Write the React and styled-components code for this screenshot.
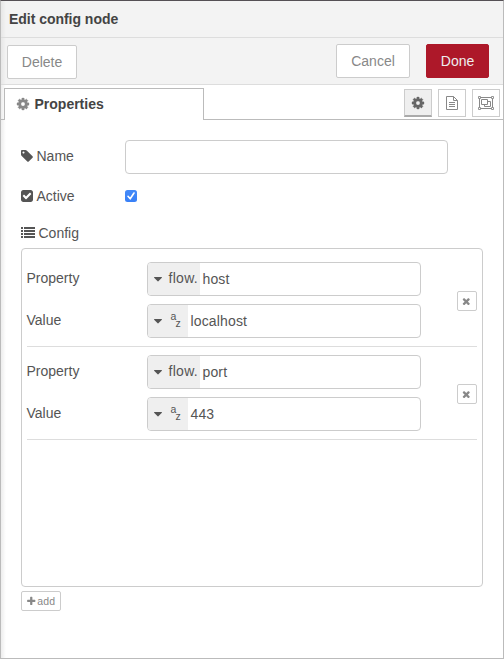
import React from "react";
import styled, { createGlobalStyle } from "styled-components";

const GlobalStyle = createGlobalStyle`
  *, *::before, *::after { box-sizing: border-box; }
  body {
    margin: 0;
    background: #fff;
    color: #555;
    font: 14px/20px "Helvetica Neue", Helvetica, "Liberation Sans", Arial, sans-serif;
  }
  button, input { font: inherit; }
`;

const Tray = styled.div`
  display: flex;
  flex-direction: column;
  height: 659px;
  width: 504px;
  border: 1px solid #bbb;
  border-top-color: #555055;
  background: linear-gradient(to right, rgba(0, 0, 0, 0.07), rgba(0, 0, 0, 0) 5px) #fff;
`;

const Header = styled.header`
  height: 37px;
  padding: 8px 8px 0;
  border-bottom: 1px solid #ddd;
  background: linear-gradient(to right, rgba(0, 0, 0, 0.05), rgba(0, 0, 0, 0) 5px) #f3f3f3;
  color: #444;
  font-weight: bold;
  letter-spacing: -0.03px;
`;

const Toolbar = styled.div`
  display: flex;
  align-items: flex-start;
  height: 47px;
  padding: 6px 14px 0 6px;
  border-bottom: 1px solid #ddd;
  background: linear-gradient(to right, rgba(0, 0, 0, 0.05), rgba(0, 0, 0, 0) 5px) #f3f3f3;
`;

const ToolbarGroup = styled.div`
  display: flex;
  gap: 16px;
  margin-left: auto;
`;

const Button = styled.button`
  width: ${(p) => p.$width}px;
  height: 34px;
  margin: ${(p) => (p.$lowered ? "1px 0 0" : "0")};
  padding: 0;
  border: 1px solid ${(p) => (p.$primary ? "#ad1829" : "#ccc")};
  border-radius: 2px;
  background: ${(p) => (p.$primary ? "#ad1829" : "#fff")};
  color: ${(p) => (p.$primary ? "#eee" : "#888")};
`;

const TabBar = styled.div`
  display: flex;
  height: 35px;
  padding-top: 3px;
`;

const TabEdge = styled.div`
  width: 3px;
  border-bottom: 1px solid #bbb;
`;

const Tab = styled.div`
  display: flex;
  gap: 5px;
  width: 200px;
  padding: 5px 0 0 10.5px;
  border: 1px solid #bbb;
  border-bottom: 0;
  background: #fff;
  color: #444;
  font-weight: bold;
  svg { color: #888; margin-top: 3px; }
`;

const TabTools = styled.div`
  flex: 1;
  display: flex;
  justify-content: flex-end;
  gap: 6px;
  padding: 1px 3px 0 0;
  border-bottom: 1px solid #bbb;
`;

const TabTool = styled.button`
  display: flex;
  align-items: center;
  justify-content: center;
  width: 28px;
  height: 28px;
  padding: 0;
  border: 1px solid #ccc;
  ${(p) => p.$active && "border-bottom: 2px solid #aaa;"}
  background: ${(p) => (p.$active ? "#efefef" : "#fff")};
  color: ${(p) => (p.$active ? "#666" : "#888")};
`;

const Form = styled.form`
  display: flex;
  flex-direction: column;
  align-items: flex-start;
  padding: 20px 20px 0;
`;

const FormRow = styled.div`
  display: grid;
  grid-template-columns: 104px 323px;
  align-items: center;
  height: ${(p) => p.$height}px;
`;

const FormLabel = styled.label`
  display: flex;
  align-items: center;
  gap: 4px;
  margin: ${(p) => p.$shift || 0}px 0 0 -0.5px;
`;

const TextInput = styled.input`
  width: 100%;
  height: 34px;
  padding: 0 8px;
  border: 1px solid #ccc;
  border-radius: 4px;
  outline: 0;
`;

const Checkbox = styled.span`
  display: flex;
  align-items: center;
  justify-content: center;
  width: 12px;
  height: 12px;
  border-radius: 2.5px;
  background: linear-gradient(#448af8, #3880f7);
`;

const ConfigList = styled.ol`
  width: 462px;
  height: 339px;
  margin: 0;
  padding: 5px;
  border: 1px solid #ccc;
  border-radius: 4px;
  list-style: none;
`;

const ConfigItem = styled.li`
  display: flex;
  align-items: center;
  justify-content: space-between;
  height: 93px;
  border-bottom: 1px solid #ddd;
`;

const ItemFields = styled.div`
  display: grid;
  row-gap: 8px;
`;

const ItemRow = styled.div`
  display: grid;
  grid-template-columns: 120px 274px;
  height: 34px;
`;

const ItemLabel = styled.label`
  padding-top: 6px;
  margin-left: -0.5px;
`;

const TypedInput = styled.div`
  display: flex;
  overflow: hidden;
  border: 1px solid #ccc;
  border-radius: 4px;
`;

const TypeSelect = styled.span`
  display: flex;
  width: ${(p) => (p.$string ? 40 : 52)}px;
  padding: 5px 0 0 2.5px;
  background: #efefef;
  letter-spacing: 0.3px;
  svg { flex: none; }
`;

const CaretSlot = styled.span`
  display: flex;
  width: 18px;
  padding-top: 4px;
`;

const AzGlyph = styled.span`
  display: grid;
  grid-template-columns: 5px 6px;
  grid-template-rows: 7px 9px;
  margin: 1px 0 0 2px;
  font-size: 10.5px;
  line-height: 11px;
  letter-spacing: 0;
  span:last-child { grid-area: 2 / 2; }
`;

const TypedValue = styled.span`
  padding: 6px 0 0 2.5px;
  letter-spacing: 0.15px;
`;

const SmallButton = styled.button`
  display: flex;
  align-items: center;
  justify-content: center;
  gap: 1px;
  width: ${(p) => p.$width}px;
  height: 20px;
  margin: ${(p) => p.$margin};
  padding: ${(p) => (p.$width > 20 ? "0 1px 0 0" : "1px 1px 0 0")};
  border: 1px solid #ccc;
  border-radius: 2px;
  background: #fff;
  color: #888;
  font-size: 10.5px;
  letter-spacing: 0.1px;
  line-height: 18px;
`;

const paths = {
  cog: "M1152 896q0-106-75-181t-181-75-181 75-75 181 75 181 181 75 181-75 75-181zm512-109v222q0 12-8 23t-20 13l-185 28q-19 54-39 91 35 50 107 138 10 12 10 25t-9 23q-27 37-99 108t-94 71q-12 0-26-9l-138-108q-44 23-91 38-16 136-29 186-7 28-36 28h-222q-14 0-24.5-8.5t-11.5-21.5l-28-184q-49-16-90-37l-141 107q-10 9-25 9-14 0-25-11-126-114-165-168-7-10-7-23 0-12 8-23 15-21 51-66.5t54-70.5q-27-50-41-99l-183-27q-13-2-21-12.5t-8-23.5v-222q0-12 8-23t19-13l186-28q14-46 39-92-40-57-107-138-10-12-10-24 0-10 9-23 26-36 98.5-107.5t94.5-71.5q13 0 26 10l138 107q44-23 91-38 16-136 29-186 7-28 36-28h222q14 0 24.5 8.5t11.5 21.5l28 184q49 16 90 37l142-107q9-9 24-9 13 0 25 10 129 119 165 170 7 8 7 22 0 12-8 23-15 21-51 66.5t-54 70.5q26 50 41 98l183 28q13 2 21 12.5t8 23.5z",
  tag: "M576 448q0-53-37.5-90.5t-90.5-37.5-90.5 37.5-37.5 90.5 37.5 90.5 90.5 37.5 90.5-37.5 37.5-90.5zm1067 576q0 53-37 90l-491 492q-39 37-91 37-53 0-90-37l-715-716q-38-37-64.5-101t-26.5-117v-416q0-52 38-90t90-38h416q53 0 117 26.5t102 64.5l715 714q37 39 37 91z",
  check: "M813 1299l614-614q19-19 19-45t-19-45l-102-102q-19-19-45-19t-45 19l-467 467-211-211q-19-19-45-19t-45 19l-102 102q-19 19-19 45t19 45l358 358q19 19 45 19t45-19zm851-883v960q0 119-84.5 203.5t-203.5 84.5h-960q-119 0-203.5-84.5t-84.5-203.5v-960q0-119 84.5-203.5t203.5-84.5h960q119 0 203.5 84.5t84.5 203.5z",
  list: "M0 128h256v256h-256zm384 0h1408v256h-1408zM0 512h256v256h-256zm384 0h1408v256h-1408zM0 896h256v256h-256zm384 0h1408v256h-1408zM0 1280h256v256h-256zm384 0h1408v256h-1408z",
  times: "M1490 1322q0 40-28 68l-136 136q-28 28-68 28t-68-28l-294-294-294 294q-28 28-68 28t-68-28l-136-136q-28-28-28-68t28-68l294-294-294-294q-28-28-28-68t28-68l136-136q28-28 68-28t68 28l294 294 294-294q28-28 68-28t68 28l136 136q28 28 28 68t-28 68l-294 294 294 294q28 28 28 68z",
  plus: "M1600 736v192q0 40-28 68t-68 28h-416v416q0 40-28 68t-68 28h-192q-40 0-68-28t-28-68v-416h-416q-40 0-68-28t-28-68v-192q0-40 28-68t68-28h416v-416q0-40 28-68t68-28h192q40 0 68 28t28 68v416h416q40 0 68 28t28 68z",
  caret: "M1408 704q0 26-19 45l-448 448q-19 19-45 19t-45-19l-448-448q-19-19-19-45t19-45 45-19h896q26 0 45 19t19 45z",
};

const Icon = ({ name, size = 14, left = 0, width = 1792 }) => (
  <svg
    width={(size * width) / 1792}
    height={size}
    viewBox={`${left} 0 ${width} 1792`}
    fill="currentColor"
    stroke="currentColor"
    strokeWidth={name === "cog" ? 40 : 0}
    aria-hidden="true"
  >
    <path d={paths[name]} />
  </svg>
);

const FileIcon = () => (
  <svg width="14" height="14" viewBox="0 0 14 14" fill="none" stroke="currentColor" aria-hidden="true">
    <path d="M1.5.5h7l4 4v9h-11zM8.5.5v4h4M4 6.5h6M4 8.5h6M4 10.5h6" />
  </svg>
);

const GroupIcon = () => (
  <svg width="16" height="14" viewBox="0 0 16 14" fill="none" stroke="currentColor" aria-hidden="true">
    <path d="M2.5 1.5h11M2.5 12.5h11M1.5 2.5v9M14.5 2.5v9" />
    <path d="M.5.5h2v2h-2zM13.5.5h2v2h-2zM.5 11.5h2v2h-2zM13.5 11.5h2v2h-2z" strokeWidth=".9" />
    <path d="M3.5 3.5h6v5h-6zM9.5 5.5h3v5h-6v-2" />
  </svg>
);

const CheckMark = () => (
  <svg width="12" height="12" viewBox="0 0 12 12" fill="none" stroke="#fff" strokeWidth="1.6" aria-hidden="true">
    <path d="M3 6.3 5.2 8.8 9 3" strokeLinecap="round" strokeLinejoin="round" />
  </svg>
);

const TypedField = ({ label, string, value }) => (
  <ItemRow>
    <ItemLabel>{label}</ItemLabel>
    <TypedInput>
      <TypeSelect $string={string}>
        <CaretSlot><Icon name="caret" /></CaretSlot>
        {string ? <AzGlyph><span>a</span><span>z</span></AzGlyph> : "flow."}
      </TypeSelect>
      <TypedValue>{value}</TypedValue>
    </TypedInput>
  </ItemRow>
);

const entries = [
  { property: "host", value: "localhost" },
  { property: "port", value: "443" },
];

export default function App() {
  return (
    <>
      <GlobalStyle />
      <Tray>
        <Header>Edit config node</Header>
        <Toolbar>
          <Button $width={70} $lowered>Delete</Button>
          <ToolbarGroup>
            <Button $width={74}>Cancel</Button>
            <Button $width={63} $primary>Done</Button>
          </ToolbarGroup>
        </Toolbar>
        <TabBar>
          <TabEdge />
          <Tab><Icon name="cog" />Properties</Tab>
          <TabTools>
            <TabTool $active aria-label="Properties"><Icon name="cog" /></TabTool>
            <TabTool aria-label="Description"><FileIcon /></TabTool>
            <TabTool aria-label="Appearance"><GroupIcon /></TabTool>
          </TabTools>
        </TabBar>
        <Form>
          <FormRow $height={34}>
            <FormLabel $shift={-2}><Icon name="tag" left={128} width={1536} />Name</FormLabel>
            <TextInput aria-label="Name" />
          </FormRow>
          <FormRow $height={44}>
            <FormLabel><Icon name="check" left={128} width={1536} />Active</FormLabel>
            <Checkbox role="checkbox" aria-checked="true"><CheckMark /></Checkbox>
          </FormRow>
          <FormRow $height={30}>
            <FormLabel><Icon name="list" />Config</FormLabel>
          </FormRow>
          <ConfigList>
            {entries.map((entry) => (
              <ConfigItem key={entry.property}>
                <ItemFields>
                  <TypedField label="Property" value={entry.property} />
                  <TypedField label="Value" string value={entry.value} />
                </ItemFields>
                <SmallButton type="button" $width={20} $margin="2px 0 0" aria-label="Remove">
                  <Icon name="times" size={10.5} />
                </SmallButton>
              </ConfigItem>
            ))}
          </ConfigList>
          <SmallButton type="button" $width={40} $margin="4px 0 0">
            <Icon name="plus" size={10.5} />add
          </SmallButton>
        </Form>
      </Tray>
    </>
  );
}
